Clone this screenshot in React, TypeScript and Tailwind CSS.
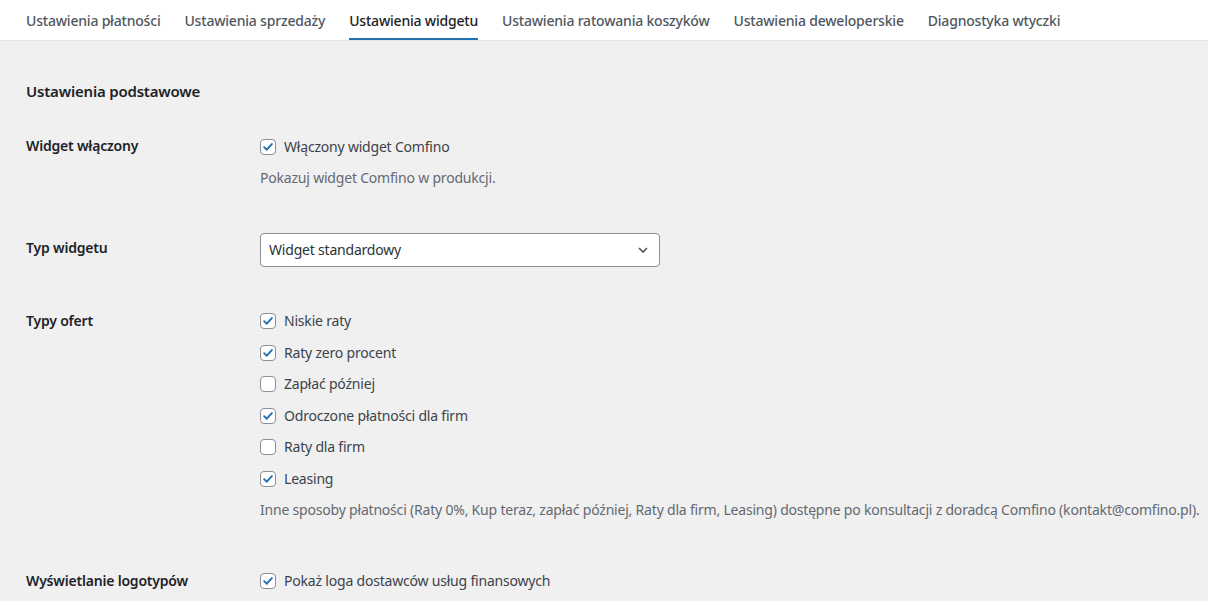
import React from "react";

const tabs = [
  "Ustawienia płatności",
  "Ustawienia sprzedaży",
  "Ustawienia widgetu",
  "Ustawienia ratowania koszyków",
  "Ustawienia deweloperskie",
  "Diagnostyka wtyczki",
];

const offers = [
  { label: "Niskie raty", checked: true },
  { label: "Raty zero procent", checked: true },
  { label: "Zapłać później", checked: false },
  { label: "Odroczone płatności dla firm", checked: true },
  { label: "Raty dla firm", checked: false },
  { label: "Leasing", checked: true },
];

function Checkbox({ checked }: { checked: boolean }) {
  return (
    <span className="flex h-4 w-4 shrink-0 items-center justify-center rounded-[4px] border border-[#8c8f94] bg-white">
      {checked && (
        <svg viewBox="0 0 16 16" className="h-[14px] w-[14px]">
          <path
            d="M3.6 8.2 6.6 11.1 12.4 4.6"
            fill="none"
            stroke="#2271b1"
            strokeWidth="2.2"
            strokeLinecap="round"
            strokeLinejoin="round"
          />
        </svg>
      )}
    </span>
  );
}

function CheckRow({ label, checked }: { label: string; checked: boolean }) {
  return (
    <label className="flex h-5 items-center gap-2 text-[#3c434a]">
      <Checkbox checked={checked} />
      <span>{label}</span>
    </label>
  );
}

export default function App() {
  return (
    <div
      className="min-h-screen bg-[#f0f0f1] text-[14px] leading-5 tracking-[-0.2px] text-[#1d2327]"
      style={{ fontFamily: '"Noto Sans", "Open Sans", sans-serif' }}
    >
      <nav className="flex h-[41px] items-end gap-6 border-b border-[#e4e4e6] bg-white pl-[26px]">
        {tabs.map((t, i) => (
          <a
            key={t}
            className={
              i === 2
                ? "flex h-[41px] items-center border-b-2 border-[#2271b1] pt-[4px] font-medium text-[#1d2327]"
                : "flex h-[41px] items-center border-b-2 border-transparent pt-[4px] font-medium text-[#50575e]"
            }
          >
            {t}
          </a>
        ))}
      </nav>

      <main className="pl-[26px]">
        <h2 className="mt-[40px] text-[15px] font-semibold">Ustawienia podstawowe</h2>

        <div className="mt-[35px] flex">
          <div className="w-[234px] shrink-0 font-semibold">Widget włączony</div>
          <div className="pt-px">
            <CheckRow label="Włączony widget Comfino" checked />
            <p className="mt-[11px] text-[#646970]">Pokazuj widget Comfino w produkcji.</p>
          </div>
        </div>

        <div className="mt-[45px] flex">
          <div className="w-[234px] shrink-0 pt-[5px] font-semibold">Typ widgetu</div>
          <div className="flex h-[34px] w-[400px] items-center justify-between rounded-[4px] border border-[#8c8f94] bg-white pl-2 pr-[10px] text-[#2c3338]">
            <span>Widget standardowy</span>
            <svg viewBox="0 0 12 12" className="h-3 w-3">
              <path d="M2 4 6 8 10 4" fill="none" stroke="#50575e" strokeWidth="1.6" />
            </svg>
          </div>
        </div>

        <div className="mt-[44px] flex">
          <div className="w-[234px] shrink-0 font-semibold">Typy ofert</div>
          <div>
            <div className="flex flex-col gap-[11.6px]">
              {offers.map((o) => (
                <CheckRow key={o.label} label={o.label} checked={o.checked} />
              ))}
            </div>
            <p className="mt-[11px] whitespace-nowrap text-[#646970]">
              Inne sposoby płatności (Raty 0%, Kup teraz, zapłać później, Raty dla firm, Leasing) dostępne po konsultacji z doradcą Comfino (kontakt@comfino.pl).
            </p>
          </div>
        </div>

        <div className="mt-[51px] flex">
          <div className="w-[234px] shrink-0 font-semibold">Wyświetlanie logotypów</div>
          <CheckRow label="Pokaż loga dostawców usług finansowych" checked />
        </div>
      </main>
    </div>
  );
}
